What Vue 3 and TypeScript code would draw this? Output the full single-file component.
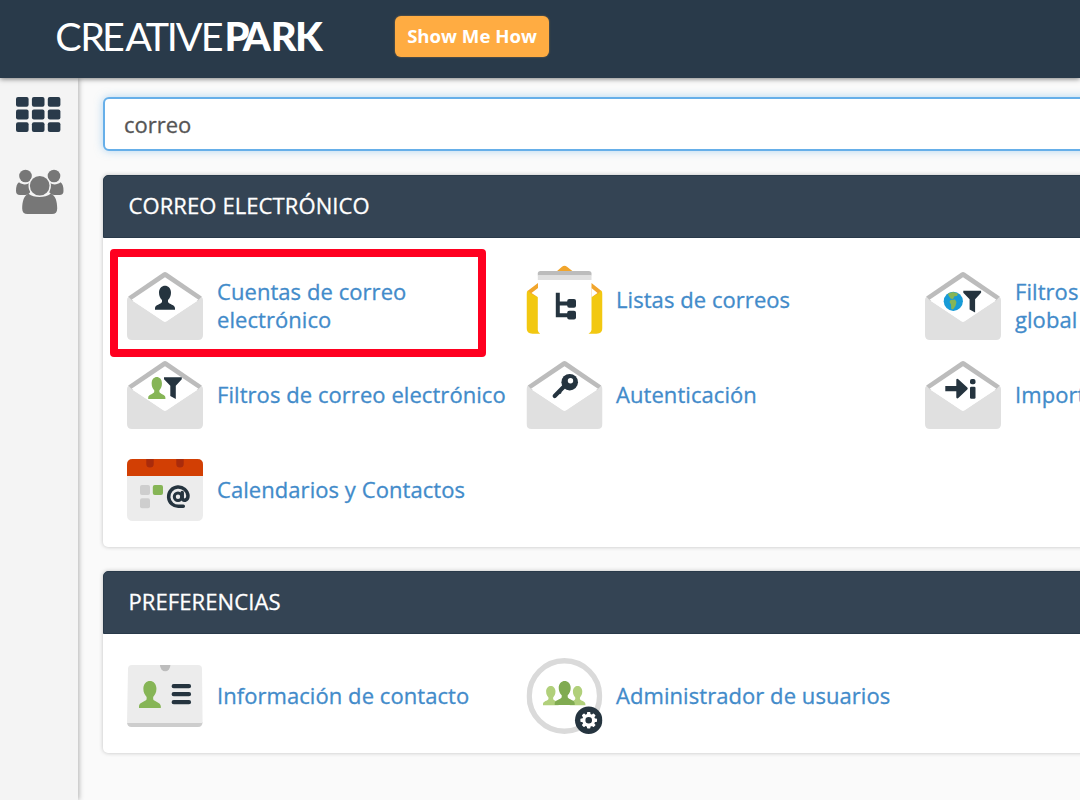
<script setup lang="ts">
type Icon = 'account' | 'lists' | 'global' | 'filter' | 'key' | 'import' | 'calendar' | 'contact' | 'users'

interface Item {
  icon: Icon
  lines: string[]
  marked?: boolean
}

interface Panel {
  title: string
  items: Item[]
}

const panels: Panel[] = [
  {
    title: 'CORREO ELECTRÓNICO',
    items: [
      { icon: 'account', lines: ['Cuentas de correo', 'electrónico'], marked: true },
      { icon: 'lists', lines: ['Listas de correos'] },
      { icon: 'global', lines: ['Filtros', 'global'] },
      { icon: 'filter', lines: ['Filtros de correo electrónico'] },
      { icon: 'key', lines: ['Autenticación'] },
      { icon: 'import', lines: ['Import'] },
      { icon: 'calendar', lines: ['Calendarios y Contactos'] },
    ],
  },
  {
    title: 'PREFERENCIAS',
    items: [
      { icon: 'contact', lines: ['Información de contacto'] },
      { icon: 'users', lines: ['Administrador de usuarios'] },
    ],
  },
]

const envelopes: Icon[] = ['account', 'global', 'filter', 'key', 'import']
const person =
  'M4 7C4-2.3 16-2.3 16 7C16 10.5 14.6 12.5 13 14.3V16.3C14 18.6 20 19 20 22.5V24H0V22.5C0 19 6 18.6 7 16.3V14.3C5.4 12.5 4 10.5 4 7Z'
const funnel = 'M0 0H17.8V2L11.8 8.5V21.8L6.3 18.8V8.5L0 2Z'
const teeth = [0, 45, 90, 135, 180, 225, 270, 315]
const cells = [0, 1, 2, 3, 4, 5, 6, 7, 8]
</script>

<template>
  <div class="app">
    <header class="topbar">
      <svg class="logo" width="268" height="40" viewBox="0 0 268 40">
        <text class="logo-thin" x="-0.7 24.2 46 69.300 89.800 110.700 119.700 144.800" y="32">CREATIVE</text>
        <text class="logo-bold" x="168.500 186.800 214.700 239" y="32">PARK</text>
      </svg>
      <button class="show">Show Me How</button>
    </header>
    <div class="body">
      <nav class="sidebar">
        <svg width="45" height="36" viewBox="0 0 45 36" fill="#293a4a">
          <rect v-for="c in cells" :key="c" :x="(c % 3) * 15.9" :y="Math.floor(c / 3) * 12.6" width="12.6" height="9.8" rx="2" />
        </svg>
        <svg class="group" width="48" height="46" viewBox="0 0 48 46" fill="#777">
          <circle cx="9.5" cy="7" r="6.3" />
          <circle cx="38" cy="7" r="6.3" />
          <path d="M3 13.3C6 16 11 16 13.3 14V19C14 22 15 23 13 24.5Q11.5 26 7 26H4Q0 26 0 22Q0 15 3 13.3ZM44.5 13.3C41.5 16 36.5 16 34.2 14V19C33.5 22 32.5 23 34.5 24.5Q36 26 40.5 26H43.5Q47.5 26 47.500 22Q47.500 15 44.500 13.300Z" />
          <circle cx="23.700" cy="16.800" r="11.200" fill="#f4f4f4" />
          <circle cx="23.700" cy="16.800" r="9.800" />
          <path d="M12.500 24.800Q17 28 23.500 28T34.700 24.800C39.500 26 41.200 33 41.200 39.500Q41.200 45 36 45H11.500Q6.200 45 6.200 39.500C6.200 33 8 26 12.500 24.800Z" />
        </svg>
      </nav>
      <main class="content">
        <div class="search">correo</div>
        <section v-for="p in panels" :key="p.title" class="panel">
          <h2>{{ p.title }}</h2>
          <div class="grid">
            <a v-for="it in p.items" :key="it.icon" class="item" :class="{ tall: it.lines.length > 1 }">
              <svg class="icon" width="76" height="76" viewBox="0 0 76 76">
                <g v-if="envelopes.includes(it.icon)">
                  <path d="M1.300 28.500L36 4.700Q38 3.400 40 4.700L74.700 28.500V33H1.300Z" fill="#bcbcbc" />
                  <path d="M0 67V32Q0 30 1.500 28.800L5 32.500L38 54L71 32.500L74.500 28.800Q76 30 76 32V67Q76 72 71 72H5Q0 72 0 67Z" fill="#e0e0e0" />
                  <path d="M4.500 31.800L38 9.300L71.500 31.800L40.500 52.700Q38 54.400 35.500 52.700Z" fill="#fff" />
                </g>
                <path v-if="it.icon === 'account'" :d="person" transform="translate(28 17.800)" fill="#25343f" />
                <g v-else-if="it.icon === 'filter'">
                  <path :d="person" transform="translate(21.200 20) scale(.86 .92)" fill="#86b556" />
                  <path :d="funnel" transform="translate(37 20.200)" fill="#25343f" />
                </g>
                <g v-else-if="it.icon === 'global'">
                  <circle cx="28.300" cy="33.300" r="9.600" fill="#179bd7" />
                  <path d="M23 25.500L28 24L33 25.500L32 28L29.500 28.300L28 31L25.500 30.500L23.500 27.500ZM25.500 32L30 31.500L31.500 34L30.500 38L28 41.500L26.300 41L26 36.500L24.500 34Z" fill="#86b556" />
                  <path :d="funnel" transform="translate(38.300 22.700)" fill="#25343f" />
                </g>
                <g v-else-if="it.icon === 'key'">
                  <path d="M38.500 28.500L28.200 39" stroke="#25343f" stroke-width="4.200" stroke-linecap="round" />
                  <path d="M33 35.200L34.300 36.500" stroke="#25343f" stroke-width="2.400" />
                  <circle cx="43.200" cy="25.200" r="8.300" fill="#25343f" />
                  <circle cx="44" cy="23.800" r="2.700" fill="#fff" />
                </g>
                <g v-else-if="it.icon === 'import'" fill="#25343f">
                  <path d="M20.300 29H31.300V22.500Q32 21.200 33.300 22.200L42.300 30.500Q43.300 31.500 42.300 32.500L33.300 41Q32 42 31.300 40.500V34.300H20.300Z" />
                  <rect x="45" y="22" width="5.500" height="5.300" rx="2" />
                  <rect x="45" y="29.700" width="5.500" height="12" rx="1.300" />
                </g>
                <g v-else-if="it.icon === 'lists'">
                  <path d="M30 9.500L35.500 4.800Q38 2.800 40.500 4.800L46.500 9.500ZM1.300 28.800L11.500 21V35H3ZM74.700 28.800L65 21V35H73Z" fill="#f1a52c" />
                  <path d="M0 66V32Q0 29.500 1.500 28.600L5 32L11.300 35V68Q11.500 70.500 13.700 71.700H6Q0 71.700 0 66ZM76 66V32Q76 29.500 74.500 28.600L71 32L65 35V68Q64.500 70.500 62 71.700H70Q76 71.700 76 66Z" fill="#f2c811" />
                  <path d="M5 31L11.500 26V35.200ZM71 31L65 26V35.200Z" fill="#fff" />
                  <path d="M11.300 13.500V11.500Q11.300 9 14 9H62.300Q65 9 65 11.500V13.500Z" fill="#bcbcbc" />
                  <rect x="11.300" y="13.300" width="53.700" height="4.700" fill="#e0e0e0" />
                  <path d="M31.300 30.700V53.200H42M31.300 41.500H42" fill="none" stroke="#25343f" stroke-width="4" />
                  <rect x="40.700" y="37" width="8.800" height="8.800" rx="2" fill="#25343f" />
                  <rect x="40.700" y="48.800" width="8.800" height="8.800" rx="2" fill="#25343f" />
                </g>
                <g v-else-if="it.icon === 'calendar'">
                  <rect y="7" width="76" height="62" rx="5.500" fill="#ececec" />
                  <path d="M0 24V12.500Q0 7 5.500 7H70.500Q76 7 76 12.500V24Z" fill="#d23f04" />
                  <path d="M19.300 7V12Q19.300 15.500 23 15.500T26.700 12V7ZM49.300 7V12Q49.300 15.500 53 15.500T56.700 12V7Z" fill="#a92b0c" />
                  <rect x="13" y="33" width="10" height="10" rx="2" fill="#cecece" />
                  <rect x="25.800" y="33" width="10.200" height="10" rx="2" fill="#86b556" />
                  <rect x="13" y="46.300" width="10" height="10" rx="2" fill="#cecece" />
                  <circle cx="51" cy="44.800" r="3.700" fill="none" stroke="#25343f" stroke-width="3" />
                  <path d="M55.200 40.500V46Q55.700 48.600 58.200 48.200Q61 47.500 61 43.800A9.700 9.700 0 1 0 52 54.300H56.300" fill="none" stroke="#25343f" stroke-width="3.500" stroke-linecap="round" />
                </g>
                <g v-else-if="it.icon === 'contact'">
                  <path d="M0 64H75.500Q75.500 69 71 69H4.500Q0 69 0 64Z" fill="#cdcdcd" />
                  <path d="M0 65L1 11Q1 7 5 7H71Q75 7 75 11L75.600 65Z" fill="#ececec" />
                  <path d="M33 7A5.200 6.300 0 0 0 43.400 7Z" fill="#bdbdbd" />
                  <path :d="person" transform="translate(12 23) scale(1.090 1.120)" fill="#86b556" />
                  <path d="M46.700 28.200H62M46.700 36.200H62M46.700 44.200H62" stroke="#25343f" stroke-width="4.200" stroke-linecap="round" />
                </g>
                <g v-else-if="it.icon === 'users'">
                  <circle cx="37.900" cy="38" r="35.200" fill="#fff" stroke="#dadada" stroke-width="5.400" />
                  <path :d="person" transform="translate(16.500 28) scale(.78 .8)" fill="#b1d07b" />
                  <path :d="person" transform="translate(43.300 28) scale(.78 .8)" fill="#b1d07b" />
                  <path :d="person" transform="translate(28.200 23)" fill="#80ab51" />
                  <circle cx="62.200" cy="62.300" r="13.700" fill="#25343f" />
                  <g transform="translate(62.200 62.300)">
                    <rect v-for="t in teeth" :key="t" x="-1.700" y="-8.300" width="3.400" height="4" rx=".8" :transform="`rotate(${t})`" fill="#fff" />
                    <circle r="4.900" fill="none" stroke="#fff" stroke-width="3.200" />
                  </g>
                </g>
              </svg>
              <span class="label"><span v-for="l in it.lines" :key="l">{{ l }}</span></span>
              <i v-if="it.marked" class="mark"></i>
            </a>
          </div>
        </section>
      </main>
    </div>
  </div>
</template>

<style>
body { margin: 0; overflow: hidden; }
</style>

<style scoped>
.app {
  width: 1080px;
  height: 800px;
  overflow: hidden;
  display: flex;
  flex-direction: column;
  background: #fafafa;
  font-family: "Open Sans", "Noto Sans", sans-serif;
}
.topbar {
  position: relative;
  z-index: 2;
  flex: none;
  box-sizing: border-box;
  height: 78px;
  display: flex;
  align-items: flex-start;
  padding: 16px 0 0 56px;
  background: #293a4a;
  box-shadow: 0 1px 5px rgba(0, 0, 0, 0.5);
}
.logo { display: block; overflow: visible; margin: 3px 71px 0 0; fill: #fff; }
.logo-thin { font: 400 39.5px Lato, sans-serif; }
.logo-bold { font: 900 40px Lato, sans-serif; }
.show {
  width: 154px;
  height: 41px;
  padding: 0 0 3px;
  border: 0;
  border-radius: 6px;
  background: #ffac42;
  box-shadow: 0 0 2px #ffac4288;
  color: #fff;
  font: 700 18.6px "Open Sans", sans-serif;
  white-space: nowrap;
}
.body { flex: 1; display: flex; min-height: 0; }
.sidebar {
  position: relative;
  z-index: 1;
  flex: none;
  box-sizing: border-box;
  width: 78px;
  padding: 19px 0 0 16px;
  background: #f4f4f4;
  box-shadow: 1px 0 5px rgba(0, 0, 0, 0.3);
}
.sidebar svg { display: block; }
.sidebar .group { margin-top: 36px; }
.content { flex: none; width: 1250px; padding: 19px 0 0 25px; }
.search {
  box-sizing: border-box;
  height: 54px;
  padding-left: 19px;
  border: 2px solid #66afe9;
  border-radius: 6px;
  background: #fff;
  box-shadow: 0 0 9px rgba(102, 175, 233, 0.5);
  color: #555;
  font-size: 22px;
  line-height: 50px;
  -webkit-text-stroke: 0.3px;
}
.panel {
  margin-top: 24px;
  border-radius: 5px;
  background: #fff;
  box-shadow: 0 0 4px rgba(0, 0, 0, 0.23);
}
h2 {
  box-sizing: border-box;
  height: 63px;
  margin: 0;
  padding-left: 24.5px;
  border: 1px solid #293a4a;
  border-radius: 5px 5px 0 0;
  background: #344454;
  color: #fff;
  font-size: 22px;
  font-weight: 400;
  line-height: 59px;
  letter-spacing: 0.1px;
  -webkit-text-stroke: 0.3px;
}
.grid {
  display: grid;
  grid-template-columns: repeat(3, 399px);
  grid-auto-rows: 95px;
  padding: 15px 0 9px 24px;
}
.item {
  position: relative;
  display: flex;
  align-items: center;
  height: 94px;
  color: #428bca;
  font-size: 22px;
  line-height: 28px;
  white-space: nowrap;
  -webkit-text-stroke: 0.3px;
}
.tall { height: 106px; }
.icon { flex: none; margin-right: 14px; }
.item:nth-child(3n + 2) .icon { transform: translateX(0.5px); }
.label { display: flex; flex-direction: column; margin-top: -3px; letter-spacing: 0.06px; }
.mark {
  position: absolute;
  left: -17px;
  top: -4px;
  box-sizing: border-box;
  width: 376px;
  height: 108px;
  border: 8px solid #ff0020;
  border-radius: 4px;
}
</style>
